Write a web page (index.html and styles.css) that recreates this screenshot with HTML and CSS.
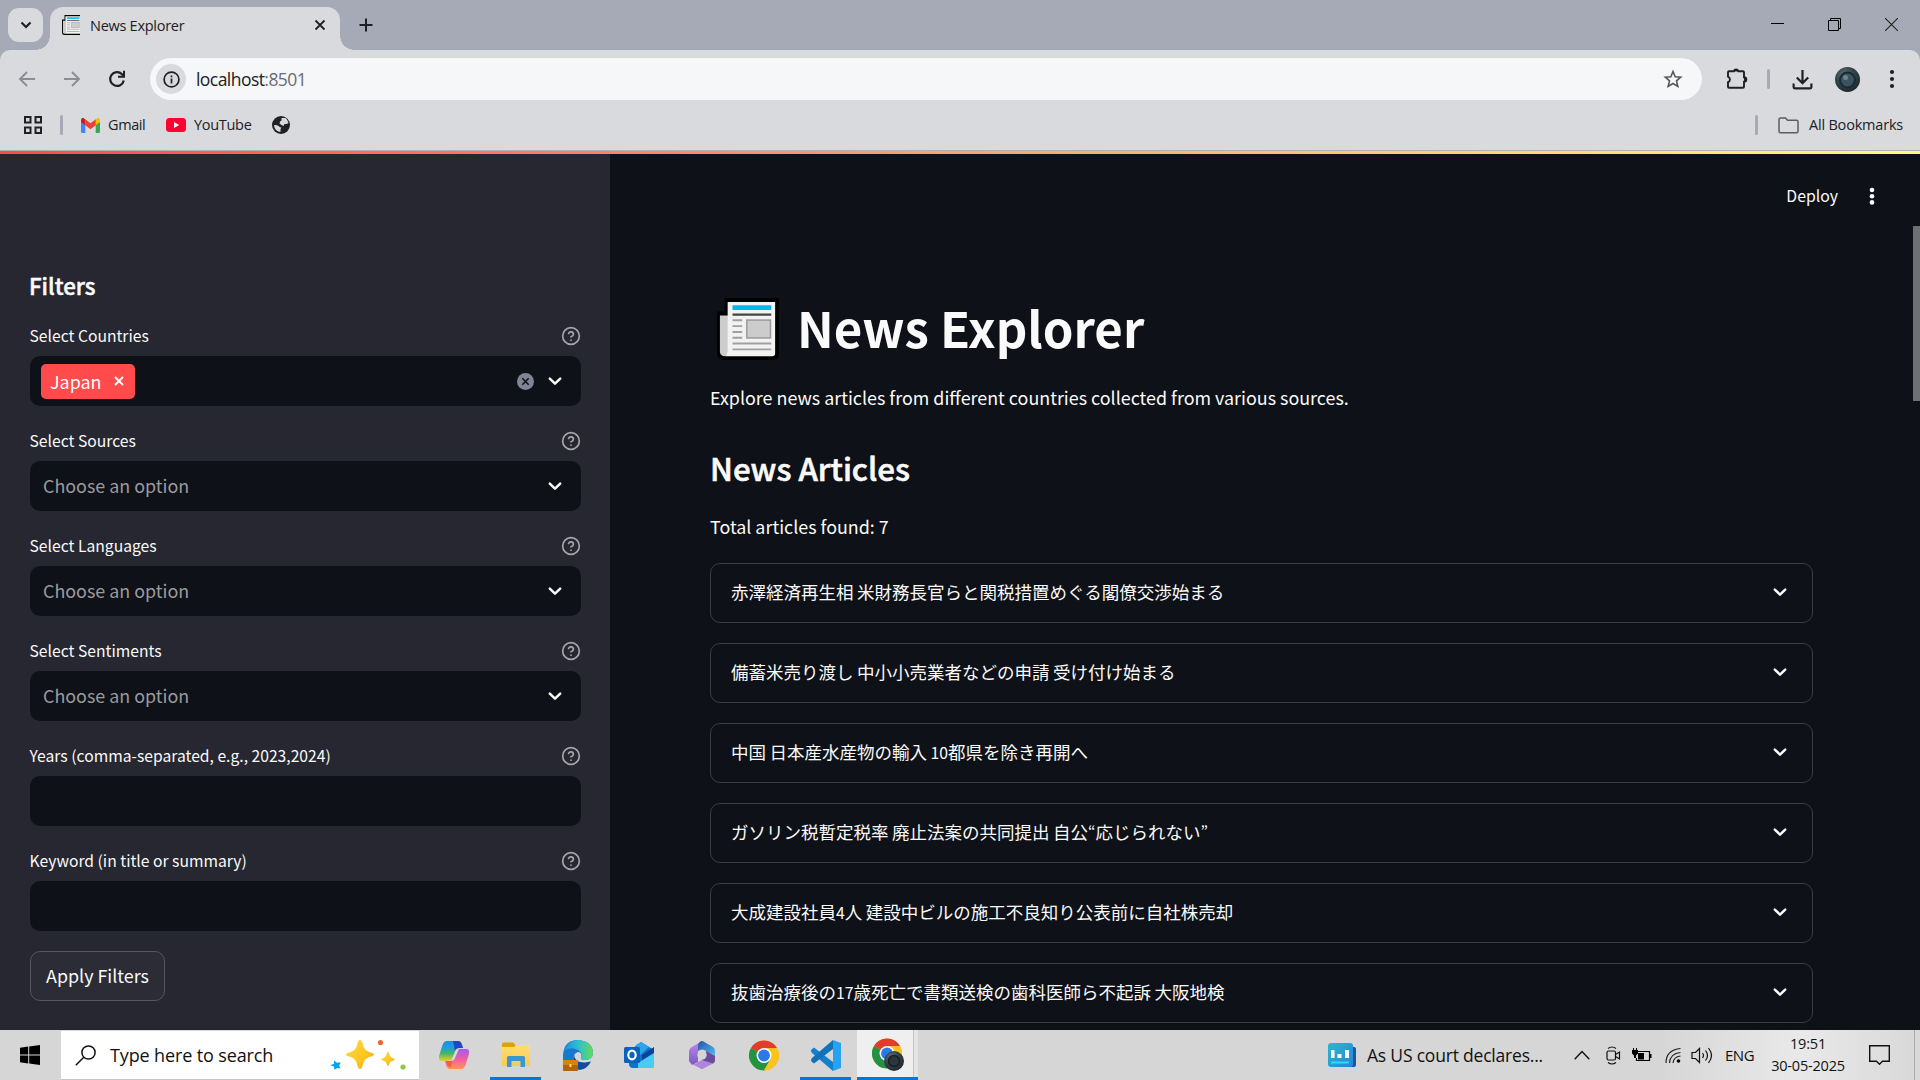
FILE: index.html
```html
<!DOCTYPE html>
<html lang="en">
<head>
<meta charset="utf-8">
<title>News Explorer</title>
<link rel="stylesheet" href="styles.css">
</head>
<body>
<svg width="0" height="0" class="defs">
  <defs>
    <linearGradient id="gBlue" x1="0" y1="0" x2="0" y2="1"><stop offset="0" stop-color="#1b8de2"/><stop offset=".3" stop-color="#1b9de2"/><stop offset=".6" stop-color="#3fb370"/><stop offset="1" stop-color="#e8d12a"/></linearGradient>
    <linearGradient id="gPink" x1="0" y1="0" x2="0" y2="1"><stop offset="0" stop-color="#a45bf0"/><stop offset=".5" stop-color="#ee5ea5"/><stop offset="1" stop-color="#ff9457"/></linearGradient>
    <linearGradient id="gStar" x1="0" y1="0" x2="1" y2="1"><stop offset="0" stop-color="#ffd94a"/><stop offset=".6" stop-color="#fcc61c"/><stop offset="1" stop-color="#f09b1e"/></linearGradient>
    <linearGradient id="gFolder" x1="0" y1="0" x2="0" y2="1"><stop offset="0" stop-color="#ffdd73"/><stop offset="1" stop-color="#fbc94a"/></linearGradient>
    <linearGradient id="gEdge" x1="0" y1="0" x2="1" y2="0"><stop offset="0" stop-color="#1f8fd8"/><stop offset=".5" stop-color="#2fc0cf"/><stop offset="1" stop-color="#62dc55"/></linearGradient>
    <linearGradient id="gM" x1="0" y1="0" x2="0" y2="1"><stop offset="0" stop-color="#c08bea"/><stop offset="1" stop-color="#7a58c8"/></linearGradient>
    <linearGradient id="gM2" x1="0" y1="0" x2="1" y2="1"><stop offset="0" stop-color="#2a4fa8"/><stop offset="1" stop-color="#4cc3ee"/></linearGradient>
    <linearGradient id="gNews" x1="0" y1="0" x2="1" y2="1"><stop offset="0" stop-color="#2bb8c9"/><stop offset="1" stop-color="#2a83dc"/></linearGradient>
    <radialGradient id="gOrb" cx=".4" cy=".35" r=".7"><stop offset="0" stop-color="#6d7f88"/><stop offset=".5" stop-color="#36454d"/><stop offset="1" stop-color="#1b2429"/></radialGradient>
    <symbol id="chev" viewBox="0 0 14 14"><path d="M1.8 4.6 7 9.6l5.2-5" fill="none" stroke="#fafafa" stroke-width="2.5" stroke-linecap="round" stroke-linejoin="round"/></symbol>
    <symbol id="help" viewBox="0 0 24 24"><g fill="none" stroke="#a6a7ac" stroke-width="2" stroke-linecap="round" stroke-linejoin="round"><circle cx="12" cy="12" r="10"/><path d="M9.1 9a3 3 0 0 1 5.8 1c0 2-3 3-3 3M12 17h.01"/></g></symbol>
    <symbol id="paper" viewBox="0 0 64 64">
      <path d="M10 0h52q2 0 2 3v55q0 6-6 6H8q-8 0-8-7V14h8V0z" fill="#000"/>
      <path d="M3 18h9v36q0 6-5 6-4-1-4-5z" fill="#ccc"/>
      <path d="M11 4h49v53q0 3-3 3H8q3-1 3-6z" fill="#f2f2f2"/>
      <path d="M16 7.500h40v5H16z" fill="#00b7f1"/><path d="M16 16h40v2.400H16z" fill="#444"/>
      <path d="M30 22h26v20H30z" fill="#999"/><path d="M31.500 23.500h23v17h-23z" fill="#ccc"/>
      <path d="M16 22h10v2H16zm0 6h10v2H16zm0 6h10v2H16zm0 6h10v2H16zm0 6h40v2H16zm0 6h40v2H16z" fill="#a0a0a0"/>
    </symbol>
    <symbol id="chrome" viewBox="0 0 30 30">
      <circle cx="15" cy="15" r="15" fill="#fbbc16"/>
      <path d="M15 15 2 7.500A15 15 0 0 1 28 7.500H15z" fill="#e33b2e"/>
      <path d="M15 15 2 7.500A15 15 0 0 0 15 30l6.500-11.300z" fill="#239244"/>
      <path d="M15 7.500h13A15 15 0 0 1 15 30l6.500-11.300z" fill="#fcc31e"/>
      <circle cx="15" cy="15" r="7.500" fill="#fff"/><circle cx="15" cy="15" r="5.900" fill="#2b78e8"/>
    </symbol>
  </defs>
</svg>

<div class="screen">
  <header class="browser">
    <div class="tabstrip">
      <div class="tab-search"><svg width="12" height="12" viewBox="0 0 12 12"><path d="M1.500 3.500L6 8l4.500-4.500" fill="none" stroke="#1f2023" stroke-width="2.200"/></svg></div>
      <div class="tab">
        <div class="favicon"><svg width="20" height="20"><use href="#paper"/></svg></div>
        <span class="tab-title">News Explorer</span>
        <svg class="tab-close" width="12" height="12" viewBox="0 0 12 12"><path d="M1.500 1.500l9 9m0-9l-9 9" stroke="#1f2023" stroke-width="1.800"/></svg>
      </div>
      <svg class="new-tab" width="14" height="14" viewBox="0 0 14 14"><path d="M7 .5v13M.5 7h13" stroke="#1f2023" stroke-width="2"/></svg>
      <div class="win-controls">
        <svg width="13" height="13" viewBox="0 0 13 13"><path d="M0 5.500h13" stroke="#000"/></svg>
        <svg width="13" height="13" viewBox="0 0 13 13"><path d="M.5 2.500h10v10H.5zM2.500 2.500v-2h10v10h-2" fill="none" stroke="#000"/></svg>
        <svg width="13" height="13" viewBox="0 0 13 13"><path d="M0 0l13 13M13 0L0 13" stroke="#222" stroke-width="1.100"/></svg>
      </div>
    </div>
    <div class="chrome-body">
      <div class="toolbar">
        <div class="nav">
          <svg width="20" height="20" viewBox="0 0 20 20"><path d="M18 10H3M10 3l-7 7 7 7" fill="none" stroke="#8b8d93" stroke-width="1.900"/></svg>
          <svg width="20" height="20" viewBox="0 0 20 20"><path d="M2 10h15M10 3l7 7-7 7" fill="none" stroke="#8b8d93" stroke-width="1.900"/></svg>
          <svg width="20" height="20" viewBox="0 0 20 20"><path d="M16.800 11.500A6.900 6.900 0 1 1 15 5.200l2 2" fill="none" stroke="#1f2023" stroke-width="2.200"/><path d="M17 1.800v6h-6" fill="none" stroke="#1f2023" stroke-width="2"/></svg>
        </div>
        <div class="omnibox">
          <div class="site-info"><svg width="17" height="17" viewBox="0 0 17 17"><circle cx="8.500" cy="8.500" r="7.400" fill="none" stroke="#1f2023" stroke-width="1.700"/><path d="M8.500 7.500v5M8.500 4.500v1.700" stroke="#1f2023" stroke-width="1.700"/></svg></div>
          <span class="url">localhost<span class="port">:8501</span></span>
          <svg class="star" width="20" height="20" viewBox="0 0 20 20"><path d="M10 2.500l2.200 5.200 5.500.5-4.200 3.700 1.300 5.500L10 14.500l-4.800 2.900 1.300-5.500-4.200-3.700 5.500-.5z" fill="none" stroke="#55565b" stroke-width="1.600"/></svg>
        </div>
        <div class="tools">
          <svg width="22" height="22" viewBox="0 0 22 22"><path d="M2 4.200q0-1 1-1h4.800a2.400 2.400 0 0 1 4.600 0H17q1 0 1 1v5a2.300 2.300 0 0 1 0 4.600v5q0 1-1 1H3q-1 0-1-1v-4.600a3 3 0 0 0 0-5.600z" fill="none" stroke="#1f2023" stroke-width="1.900"/><path d="M7.800 3.500a2.200 2.200 0 0 1 4.400 0zM18 9.300a2.200 2.200 0 0 1 0 4.400z" fill="#1f2023"/></svg>
          <i class="vsep"></i>
          <svg width="21" height="21" viewBox="0 0 21 21"><path d="M10.500 1v13M4.800 8.500l5.700 5.700 5.700-5.700M1.600 14.500v3.600q0 1.200 1.200 1.200h15.400q1.200 0 1.200-1.200v-3.600" fill="none" stroke="#1f2023" stroke-width="2.200"/></svg>
          <svg width="25" height="25" viewBox="0 0 25 25"><circle cx="12.500" cy="12.500" r="12.500" fill="url(#gOrb)"/><circle cx="12.500" cy="13" r="7.500" fill="#3a5360" stroke="#1a2a33" stroke-width="2"/><circle cx="10.500" cy="10.500" r="2.500" fill="#6c8490"/></svg>
          <svg width="6" height="20" viewBox="0 0 6 20"><g fill="#1f2023"><circle cx="3" cy="3" r="2.100"/><circle cx="3" cy="10" r="2.100"/><circle cx="3" cy="17" r="2.100"/></g></svg>
        </div>
      </div>
      <div class="bookmarks">
        <svg class="bm-apps" width="18" height="18" viewBox="0 0 18 18"><path d="M1 1h5.500v5.500H1zM11.500 1H17v5.500h-5.500zM1 11.500h5.500V17H1zM11.500 11.500H17V17h-5.500z" fill="none" stroke="#1f2023" stroke-width="2"/></svg>
        <i class="vsep bm-sep"></i>
        <svg class="bm-gmail" width="19" height="15" viewBox="0 0 19 15"><path d="M0 2v11.500Q0 15 1.500 15H4.300V5.500z" fill="#4285f4"/><path d="M19 2v11.500q0 1.500-1.500 1.500h-2.800V5.500z" fill="#34a853"/><path d="M14.700 1.500v5.800L19 4V2q-.2-2.500-2.600-2z" fill="#fbbc04"/><path d="M4.300 1.500v5.800L0 4V2Q.2-.5 2.600 0z" fill="#c5221f"/><path d="M4.300 1.300l5.200 4 5.200-4v6l-5.200 4-5.200-4z" fill="#ea4335"/></svg>
        <span class="t-gmail">Gmail</span>
        <svg class="bm-yt" width="20" height="14" viewBox="0 0 20 14"><rect width="20" height="14" rx="3.500" fill="#f03"/><path d="M8 4l5.200 3L8 10z" fill="#fff"/></svg>
        <span class="t-yt">YouTube</span>
        <svg class="bm-globe" width="18" height="18" viewBox="0 0 18 18"><circle cx="9" cy="9" r="9" fill="#202124"/><path d="M2 9q3-.5 4.500 1t3 1.500l-1 1.500v3Q2.500 15 2 9zM9.500 2h4q2.500 2 3 5l-2 1-2 0-1 2-2-1-2-1.500.5-2 1.500-1z" fill="#d9dade"/></svg>
        <i class="vsep bm-right"></i>
        <svg class="bm-folder" width="21" height="17" viewBox="0 0 21 17"><path d="M1 2.500Q1 1 2.500 1h5l2 2.300h9Q20 3.300 20 4.800v9.400q0 1.500-1.500 1.500h-16Q1 15.700 1 14.200z" fill="none" stroke="#5b5c61" stroke-width="1.500"/></svg>
        <span class="t-all">All Bookmarks</span>
      </div>
    </div>
  </header>

  <div class="decoration"></div>

  <div class="app">
    <aside class="sidebar">
      <h2>Filters</h2>
      <div class="field"><div class="label"><span>Select Countries</span><svg width="20" height="20"><use href="#help"/></svg></div>
        <div class="box has-tag"><span class="tag">Japan<svg width="10" height="10" viewBox="0 0 10 10"><path d="M1 1l8 8m0-8L1 9" stroke="#fff" stroke-width="1.900"/></svg></span>
          <svg class="clear" width="17" height="17" viewBox="0 0 17 17"><circle cx="8.500" cy="8.500" r="8.500" fill="#808495"/><path d="M5.300 5.300l6.400 6.400m0-6.400l-6.400 6.400" stroke="#0e1117" stroke-width="1.600"/></svg><svg class="arrow" width="14" height="14"><use href="#chev"/></svg></div></div>
      <div class="field"><div class="label"><span>Select Sources</span><svg width="20" height="20"><use href="#help"/></svg></div><div class="box"><span class="placeholder">Choose an option</span><svg width="14" height="14"><use href="#chev"/></svg></div></div>
      <div class="field"><div class="label"><span>Select Languages</span><svg width="20" height="20"><use href="#help"/></svg></div><div class="box"><span class="placeholder">Choose an option</span><svg width="14" height="14"><use href="#chev"/></svg></div></div>
      <div class="field"><div class="label"><span>Select Sentiments</span><svg width="20" height="20"><use href="#help"/></svg></div><div class="box"><span class="placeholder">Choose an option</span><svg width="14" height="14"><use href="#chev"/></svg></div></div>
      <div class="field"><div class="label"><span>Years (comma-separated, e.g., 2023,2024)</span><svg width="20" height="20"><use href="#help"/></svg></div><div class="box"></div></div>
      <div class="field"><div class="label"><span>Keyword (in title or summary)</span><svg width="20" height="20"><use href="#help"/></svg></div><div class="box"></div></div>
      <button class="apply">Apply Filters</button>
    </aside>
    <main class="main">
      <div class="app-bar"><span class="deploy">Deploy</span><svg width="6" height="18" viewBox="0 0 6 18"><g fill="#fafafa"><circle cx="3" cy="3" r="2.300"/><circle cx="3" cy="9.200" r="2.300"/><circle cx="3" cy="15.400" r="2.300"/></g></svg></div>
      <div class="content">
        <h1><svg width="62" height="62"><use href="#paper"/></svg><span>News Explorer</span></h1>
        <p class="intro">Explore news articles from different countries collected from various sources.</p>
        <h3>News Articles</h3>
        <p class="total">Total articles found: 7</p>
        <div class="articles" lang="ja">
          <div class="article"><span>赤澤経済再生相 米財務長官らと関税措置めぐる閣僚交渉始まる</span><svg width="14" height="14"><use href="#chev"/></svg></div>
          <div class="article"><span>備蓄米売り渡し 中小小売業者などの申請 受け付け始まる</span><svg width="14" height="14"><use href="#chev"/></svg></div>
          <div class="article"><span>中国 日本産水産物の輸入 <b>10</b>都県を除き再開へ</span><svg width="14" height="14"><use href="#chev"/></svg></div>
          <div class="article"><span>ガソリン税暫定税率 廃止法案の共同提出 自公<b>“</b>応じられない<b>”</b></span><svg width="14" height="14"><use href="#chev"/></svg></div>
          <div class="article"><span>大成建設社員<b>4</b>人 建設中ビルの施工不良知り公表前に自社株売却</span><svg width="14" height="14"><use href="#chev"/></svg></div>
          <div class="article"><span>抜歯治療後の<b>17</b>歳死亡で書類送検の歯科医師ら不起訴 大阪地検</span><svg width="14" height="14"><use href="#chev"/></svg></div>
        </div>
      </div>
      <div class="scroll-thumb"></div>
    </main>
  </div>

  <footer class="taskbar">
    <div class="start"><svg width="20" height="20" viewBox="0 0 20 20"><path d="M0 2.800l8.200-1.200v7.900H0zM9.200 1.400L20 0v9.500H9.200zM0 10.500h8.200v7.900L0 17.200zM9.200 10.500H20V20L9.200 18.600z"/></svg></div>
    <div class="search">
      <svg width="21" height="21" viewBox="0 0 21 21"><circle cx="13.500" cy="7.500" r="6.600" fill="none" stroke="#111" stroke-width="1.500"/><path d="M8.800 12.200L.8 20.200" stroke="#111" stroke-width="1.500"/></svg>
      <span>Type here to search</span>
      <svg class="sparkles" width="76" height="32" viewBox="0 0 76 32"><path d="M30 1q2 0 3 5 1 5 6 7 5 1 5 2.500t-5 2.500q-5 2-6 7-1 5-3 5t-3-5q-1-5-6-7-5-1-5-2.500t5-2.500q5-2 6-7 1-5 3-5z" fill="url(#gStar)"/><path d="M58 13q1 0 2 4 1 2 5 3 0 1-5 3-1 4-2 4t-2-4q-5-2-5-3 4-1 5-3 1-4 2-4z" fill="url(#gStar)"/><path d="M4 21.500l3 2.300 3.700-.6-1.500 3.500 1.300 2.800-3.500-.4L4.500 31 4 27.600.3 26.200 4 24.700z" fill="#00a4ef"/><circle cx="50.500" cy="3.500" r="2.600" fill="#f0652f"/><circle cx="73" cy="28" r="2.600" fill="#8cc840"/></svg>
    </div>
    <div class="pins">
      <div class="pin"><svg width="30" height="28" viewBox="0 0 30 28"><path d="M8 0h11q3 0 4 4l1 3h-4q-3 0-4 4l-3 7q-1 2-4 2H2q-3-1-2-5L3.500 4Q5 0 8 0z" fill="url(#gBlue)"/><path d="M14 0h5q3 0 4 4l1 3h-4q-3 0-4 3z" fill="#2048c4"/><path d="M22 28H11q-3 0-4-4l-1-4h5q3 0 4-4l2-6q1-2 4-2h7q3 1 2 5l-3.500 11Q25 28 22 28z" fill="url(#gPink)"/><path d="M7 20h4q3 0 3-3l-2 9q-4 0-5-6z" fill="#f0603b"/><path d="M16.500 9.500Q17 8 20 8l-4 9q-1 3-4 3 1-1 1.500-3z" fill="#dcd6d6"/></svg></div>
      <div class="pin running"><svg width="28" height="26" viewBox="0 0 28 26"><path d="M0 2q0-1.500 1.500-1.500H11L13.500 3v4H0z" fill="#e2a100"/><path d="M0 5h12l2-1.500h13q1 0 1 1V23q0 1-1 1H1q-1 0-1-1z" fill="url(#gFolder)"/><path d="M5 25V15.500Q5 14 6.500 14h15q1.500 0 1.500 1.500V25h-4.500v-6h-9v6z" fill="#3f94d2"/></svg></div>
      <div class="pin"><svg width="30" height="31" viewBox="0 0 30 31"><path d="M0 20v-5Q1 0 15 0q14 1 15 12 0 8-8 8-5 0-4-3 1-5-3-5-5 1-4 8z" fill="#1479cf"/><path d="M1 11Q5 0 15 0q14 1 15 12 0 8-8 8-5 0-4-3 1.500-5-3-7Q8 6 1 11z" fill="url(#gEdge)"/><path d="M11 15q1 8 11 7.500l6-1q-4 8-12 8.500-6-3-5-15z" fill="#0f4e9b"/><rect y="20" width="15" height="11" rx="1" fill="#b26508"/><path d="M0 20h15v5H0z" fill="#d8820f"/><path d="M6.500 24h2v3h-2z" fill="#ffe25c"/></svg></div>
      <div class="pin"><svg width="31" height="28" viewBox="0 0 31 28"><path d="M5 10L17 1l13 8v15q0 3-3 3H9q-4 0-4-4z" fill="#0f73cc"/><path d="M12 4l5-3 8 5-10 9z" fill="#2ba4ea"/><path d="M18 14L30 6v6L18 19z" fill="#0c4198"/><path d="M14 22l16-10v13q0 2-3 2H14z" fill="#4acbf5"/><rect y="6" width="16" height="16" rx="1.500" fill="#0a62bd"/><ellipse cx="8" cy="14" rx="3.700" ry="4.300" fill="none" stroke="#fff" stroke-width="2.200"/></svg></div>
      <div class="pin"><svg width="26" height="28" viewBox="0 0 26 28"><path d="M13 0L2 6.500Q0 8 0 10v10l3 4 6-3V10l8-5z" fill="url(#gM)"/><path d="M11.500.5q1.500-1 3 0L24 6q2 1.500 2 4v5L17 10q-4-3-8 0V4q0-2 2.500-3.500z" fill="url(#gM2)"/><path d="M2 22.500q4 2 7-1.500l4-2 13-5v5q0 2-2 3.500l-9.500 5q-1.500 1-3 0z" fill="#b083dc"/><path d="M17.500 10L26 15v4q0 2-2 3.500L13 19z" fill="#6a4a9c"/><circle cx="13" cy="14" r="4.700" fill="#d5d5d5"/></svg></div>
      <div class="pin"><svg width="30" height="31"><use href="#chrome"/></svg></div>
      <div class="pin running"><svg width="30" height="31" viewBox="0 0 30 31"><path d="M0 10l3-2.500L22 22v9L1 13q-1-1-1-3z" fill="#1380cc"/><path d="M0 21l3 2.500L22 9V0L1 18q-1 1-1 3z" fill="#1272b8"/><path d="M22 0l8 3v25l-8 3z" fill="#25a3f0"/></svg></div>
      <div class="pin active"><svg width="32" height="34" viewBox="0 0 32 34"><svg width="30" height="31"><use href="#chrome"/></svg><circle cx="22" cy="23" r="10" fill="url(#gOrb)"/><circle cx="22" cy="23" r="5.500" fill="#2b363d" stroke="#171f24" stroke-width="1.500"/></svg></div>
    </div>
    <div class="tray">
      <svg class="news-ico" width="28" height="24" viewBox="0 0 28 24"><path d="M22 4h4q2 0 2 2v16q0 2-2 2h-4z" fill="#1559a8"/><rect width="25" height="24" rx="3" fill="url(#gNews)"/><path d="M3 7h3.500v8H3zM9.500 11h4v4h-4zM17 7h4v8h-4z" fill="#fff"/><path d="M3 18.500h18v2H3z" fill="#25e0f0"/></svg>
      <span class="headline">As US court declares...</span>
      <svg class="i-up" width="16" height="10" viewBox="0 0 16 10"><path d="M.7 9.200L8 1.500l7.300 7.700" fill="none" stroke="#111" stroke-width="1.400"/></svg>
      <svg class="i-cam" width="15" height="19" viewBox="0 0 15 19"><g fill="none" stroke="#111" stroke-width="1.200"><rect x="1" y="5" width="8.500" height="9" rx="1.500"/><path d="M9.500 8.500L13.500 6v7l-4-2.500M2 2.500q4-3 8 0M2 16.500q4 3 8 0"/></g></svg>
      <svg class="i-bat" width="20" height="14" viewBox="0 0 20 14"><path d="M5 3.500h12.500v9H4.500V10" fill="none" stroke="#000" stroke-width="1.200"/><path d="M6 5h6v6.500H6zM18 6h1.500v4H18zM0 2h6v3.500L4 7.500V10H2V7.500L0 5.500z"/><path d="M1.500 0v3M4.500 0v3" stroke="#000"/></svg>
      <svg class="i-wifi" width="17" height="17" viewBox="0 0 17 17"><g fill="none" stroke="#222" stroke-width="1.200"><path d="M1 16Q1 3 15.500 1.500M4.500 16Q5 6.500 15.500 5.500M8 16Q8.500 10 15.500 9"/></g><circle cx="13.500" cy="14" r="1.800"/></svg>
      <svg class="i-vol" width="22" height="17" viewBox="0 0 22 17"><g fill="none" stroke="#111" stroke-width="1.200"><path d="M1 5.500h3.500L8.500 1.500v14l-4-4H1zM11.500 6q2 2.500 0 5M14.500 3.500q4 5 0 10M17.500 1q6 7.500 0 15"/></g></svg>
      <span class="lang">ENG</span>
      <div class="clock"><span class="time">19:51</span><span class="date">30-05-2025</span></div>
      <svg class="i-note" width="21" height="20" viewBox="0 0 21 20"><path d="M.7.7h19.600v15.500h-6.800L10.500 19.200l-3-3H.7z" fill="none" stroke="#111" stroke-width="1.400"/></svg>
      <i class="show-desktop"></i>
    </div>
  </footer>
</div>
</body>
</html>
```

FILE: styles.css
```css
* { box-sizing: border-box; }
body { margin: 0; background: #0e1117; overflow: hidden; }
svg { display: block; flex: none; }
.defs { position: absolute; }
h1, h2, h3, p { margin: 0; font-weight: normal; }
.screen { width: 1920px; height: 1080px; display: flex; flex-direction: column; font-family: "Noto Sans CJK JP", sans-serif; color: #fafafa; }

/* Browser frame */
.browser { height: 151px; background: #a6aab6; color: #202124; font-family: "Open Sans", sans-serif; flex: none; }
.tabstrip { height: 50px; display: flex; align-items: flex-start; padding-left: 8px; }
.tab-search { width: 35px; height: 34px; margin: 8px 7px 0 0; border-radius: 11px; background: #d9dade; display: grid; place-items: center; }
.tab { position: relative; width: 290px; height: 43px; margin-top: 7px; border-radius: 13px 13px 0 0; background: #d9dade; display: flex; align-items: center; padding: 0 14px 7px 12px; }
.tab::before, .tab::after { content: ""; position: absolute; bottom: 0; width: 14px; height: 14px; }
.tab::before { left: -14px; background: radial-gradient(circle at 0 0, transparent 13.500px, #d9dade 14px); }
.tab::after { right: -14px; background: radial-gradient(circle at 100% 0, transparent 13.500px, #d9dade 14px); }
.favicon { width: 18px; overflow: hidden; margin-right: 10px; }
.tab-title { font-size: 14.500px; letter-spacing: -0.27px; white-space: nowrap; }
.tab-close { margin-left: auto; }
.new-tab { margin: 18px 0 0 19px; }
.win-controls { margin: 18px 22px 0 auto; display: flex; gap: 44px; }
.chrome-body { height: 101px; background: #d9dade; border-radius: 10px 10px 0 0; border-bottom: 1px solid #b0b2b8; }
.toolbar { height: 58px; display: flex; align-items: center; padding-left: 17px; }
.nav { display: flex; gap: 25px; width: 133px; padding-bottom: 1px; }
.omnibox { width: 1552px; height: 42px; border-radius: 21px; background: #f5f7f9; display: flex; align-items: center; padding: 0 19px 0 6px; }
.site-info { width: 30px; height: 30px; border-radius: 50%; background: #d9dade; display: grid; place-items: center; margin-right: 10px; }
.url { font-size: 17.500px; letter-spacing: -0.55px; padding-bottom: 1px; }
.port { color: #6a6c72; }
.star { margin-left: auto; }
.tools { display: flex; align-items: center; margin-left: 24px; }
.vsep { width: 3px; height: 20px; border-radius: 2px; background: #a6aab6; flex: none; }
.tools svg:nth-of-type(1) { margin-right: 19px; }
.tools svg:nth-of-type(2) { margin: 0 22px 0 22px; }
.tools svg:nth-of-type(4) { margin-left: 29px; }
.bookmarks { height: 32px; margin-top: 1px; display: flex; align-items: center; font-size: 14.500px; padding-left: 24px; white-space: nowrap; }
.bookmarks span { padding-bottom: 2px; }
.bm-sep { margin: 0 18px; }
.bm-gmail { margin-right: 8px; }
.t-gmail { width: 58px; letter-spacing: -0.4px; }
.t-yt { width: 78px; letter-spacing: -0.3px; }
.bm-yt { margin-right: 8px; }
.bm-right { margin-left: auto; margin-right: 20px; }
.bm-folder { margin-right: 10px; }
.t-all { width: 111px; letter-spacing: -0.2px; }

/* App */
.decoration { height: 3px; background: linear-gradient(90deg, #ff4b4b, #fffd80); flex: none; }
.app { height: 876px; display: flex; flex: none; overflow: hidden; }
.sidebar { width: 610px; background: #262730; padding: 0 29px 0 30px; flex: none; }
.sidebar h2 { margin-top: 114px; height: 36px; line-height: 35px; font-size: 22.300px; font-weight: 500; text-indent: -1px; -webkit-text-stroke: .5px #fafafa; }
.field { height: 105px; padding-top: 20px; }
.label { display: flex; justify-content: space-between; align-items: center; height: 24px; font-size: 15.680px; line-height: 24px; margin-bottom: 8px; text-indent: -.5px; }
.label span { white-space: nowrap; }
.box { height: 50px; border-radius: 10px; background: #0e1117; display: flex; align-items: center; padding: 0 19px 0 13px; }
.box > svg:last-child { margin-left: auto; }
.has-tag { padding-left: 11px; }
.tag { height: 35px; width: 94px; border-radius: 5px; background: #ff4b4b; padding: 0 11px 0 9px; display: flex; align-items: center; justify-content: space-between; font-size: 17.900px; line-height: 30px; color: #fff; }
.tag { padding-bottom: 0; }
.clear { margin-left: auto; margin-right: 14px; }
.box > svg.arrow { margin-left: 0; }
.placeholder { font-size: 17.900px; line-height: 46px; padding-bottom: 2px; color: #9a9b9f; }
.apply { display: block; width: 135px; height: 50px; margin-top: 17px; padding: 0 0 3px; border: 1px solid #55565d; border-radius: 10px; background: #2b2c36; color: #fafafa; font: 17.900px "Noto Sans CJK JP", sans-serif; white-space: nowrap; }
.main { position: relative; flex: 1; background: #0e1117; }
.app-bar { height: 85px; display: flex; align-items: center; justify-content: flex-end; padding: 0 45px 2px 0; font-size: 15.800px; gap: 31px; }
.content { width: 1103px; margin-left: 100px; }
h1 { height: 66px; margin-top: 57px; display: flex; align-items: center; font-size: 49.150px; font-weight: 700; line-height: 60px; }
h1 svg { margin: 0 18px 0 7px; }
h1 span { padding-bottom: 4px; }
.intro, .total { font-size: 17.900px; line-height: 30px; white-space: nowrap; }
.intro { margin-top: 20px; }
h3 { margin-top: 31px; font-size: 31.200px; line-height: 50px; font-weight: 500; -webkit-text-stroke: .6px #fafafa; }
.total { margin-top: 18px; }
.articles { margin-top: 22px; display: grid; gap: 20px; }
.article { height: 60px; border: 1px solid #3b3d42; border-radius: 10px; display: flex; justify-content: space-between; align-items: center; padding: 0 25px 2px 20px; font-size: 17.500px; line-height: 50px; word-spacing: -0.4px; white-space: nowrap; }
.article b { font-weight: 400; font-size: 15.750px; }
.scroll-thumb { position: absolute; right: 0; top: 72px; width: 7px; height: 175px; background: #6f7074; }

/* Taskbar */
.taskbar { height: 50px; display: flex; background: linear-gradient(90deg, #d6d6d6 0 1660px, #e9e9e9 1800px, #d8d8d8); color: #111; font-family: "Open Sans", sans-serif; flex: none; white-space: nowrap; }
.start { width: 61px; padding: 15px 0 0 20px; }
.search { width: 358px; height: 49px; margin-top: 1px; background: #fff; border: 1px solid #c5c5c5; border-width: 0 0 1px; display: flex; align-items: center; padding: 0 13px 0 14px; font-size: 18px; }
.search span { margin-left: 14px; letter-spacing: -0.13px; }
.sparkles { margin-left: auto; }
.pins { display: flex; margin-left: 9px; gap: 11px; }
.pin { flex: none; width: 51px; height: 50px; padding-top: 3px; display: grid; place-items: center; border-bottom: 3px solid transparent; }
.pin.running { border-bottom-color: #0078d7; }
.pin.active { width: 61px; margin-left: -5px; border-bottom-color: #0078d7; background: linear-gradient(90deg, #efefef 0 56px, #c5c5c5 56px 57px, #e5e5e5 57px); }
.tray { margin-left: auto; display: flex; align-items: center; }
.news-ico { margin-right: 11px; }
.headline { font-size: 17.500px; width: 207px; letter-spacing: -0.2px; }
.i-up { margin-right: 16px; }
.i-cam { margin-right: 11px; }
.i-bat { margin-right: 13px; }
.i-wifi { margin-right: 9px; }
.i-vol { margin-right: 12px; }
.lang { font-size: 15px; width: 33px; letter-spacing: -0.5px; }
.clock { width: 100px; display: flex; flex-direction: column; align-items: center; font-size: 14.500px; line-height: 22px; letter-spacing: -0.2px; }
.i-note { margin: 0 24px 0 11px; }
.show-desktop { width: 6px; height: 50px; border-left: 1px solid #aaa; }
```
